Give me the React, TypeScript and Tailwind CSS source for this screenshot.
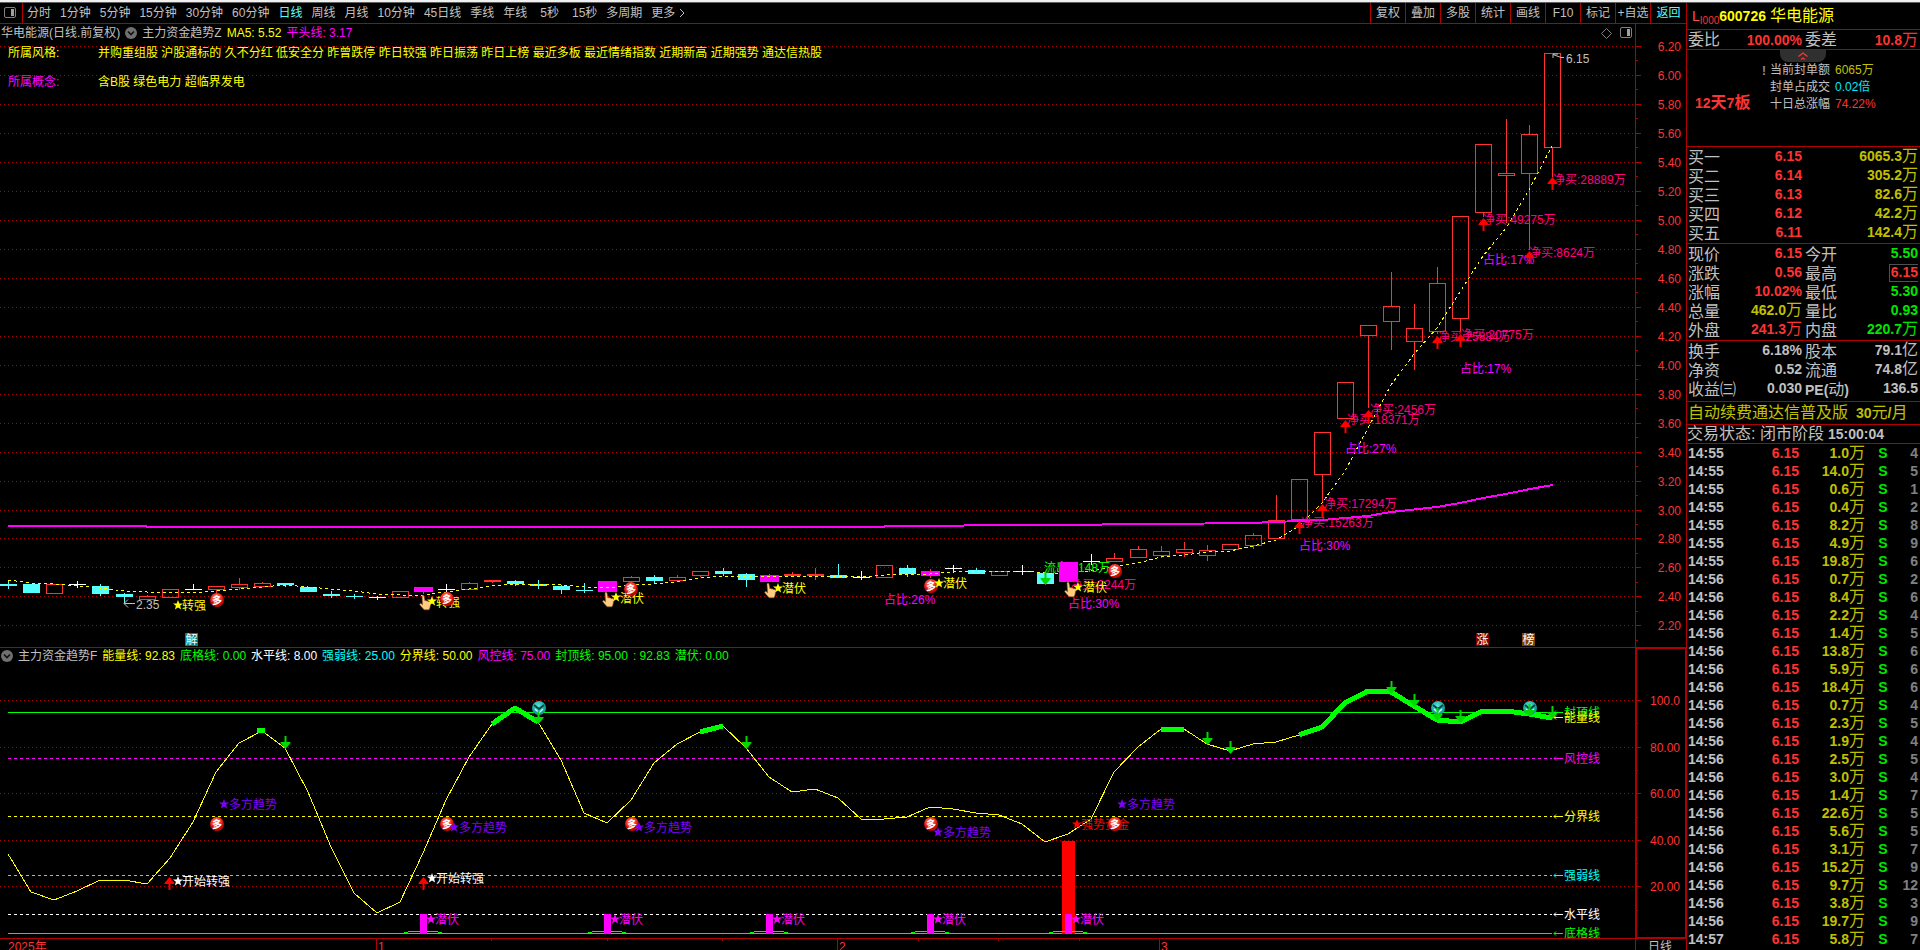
import type { ReactNode } from "react";
import clsx from "clsx";

const periods = ["分时", "1分钟", "5分钟", "15分钟", "30分钟", "60分钟", "日线", "周线", "月线", "10分钟", "45日线", "季线", "年线", "5秒", "15秒", "多周期"];
const tools = ["复权", "叠加", "多股", "统计", "画线", "F10", "标记", "+自选"];

// screen y where each pane begins
const PRICE_TOP = 24;
const ENERGY_TOP = 648;

const barX = (i: number) => Math.round(8.3 + i * 23.045);
const priceY = (p: number) => Math.round(46 + (6.2 - p) * 144.85);
const energyY = (v: number) => Math.round(933 - v * 2.33);

type Kind = "up" | "down" | "flat" | "mark";

// [kind, body top, body bottom, wick top, wick bottom]
const candles: [Kind, number, number, number, number][] = [
    ["down", 584, 586, 581, 589],
    ["down", 584, 593, 584, 593],
    ["up", 584, 593, 584, 593],
    ["flat", 584, 584, 581, 588],
    ["down", 586, 594, 584, 596],
    ["down", 594, 597, 593, 604],
    ["up", 596, 599, 595, 599],
    ["up", 589, 597, 589, 597],
    ["flat", 589, 589, 584, 589],
    ["up", 586, 589, 586, 593],
    ["up", 584, 587, 578, 590],
    ["up", 583, 586, 582, 586],
    ["down", 583, 585, 583, 587],
    ["down", 587, 592, 587, 592],
    ["down", 594, 596, 591, 598],
    ["down", 596, 597, 594, 599],
    ["flat", 597, 597, 596, 600],
    ["up", 591, 597, 591, 598],
    ["mark", 587, 592, 587, 594],
    ["flat", 589, 589, 584, 591],
    ["up", 583, 589, 582, 589],
    ["up", 580, 581, 580, 583],
    ["down", 581, 584, 580, 586],
    ["down", 584, 586, 580, 589],
    ["down", 586, 590, 585, 594],
    ["down", 590, 591, 583, 593],
    ["mark", 581, 592, 581, 592],
    ["up", 577, 581, 576, 583],
    ["down", 577, 581, 575, 584],
    ["up", 577, 580, 575, 580],
    ["up", 571, 575, 571, 577],
    ["down", 571, 574, 568, 576],
    ["down", 574, 580, 573, 587],
    ["mark", 575, 582, 574, 582],
    ["up", 574, 575, 572, 577],
    ["up", 574, 575, 568, 580],
    ["down", 575, 578, 564, 578],
    ["flat", 577, 577, 571, 580],
    ["up", 565, 577, 565, 577],
    ["down", 568, 574, 565, 577],
    ["mark", 571, 576, 569, 578],
    ["flat", 568, 568, 565, 573],
    ["down", 570, 574, 568, 574],
    ["up", 571, 575, 571, 575],
    ["flat", 571, 571, 565, 575],
    ["down", 573, 584, 573, 584],
    ["mark", 562, 582, 562, 582],
    ["flat", 561, 561, 554, 565],
    ["up", 558, 561, 553, 561],
    ["up", 549, 557, 546, 557],
    ["up", 551, 555, 546, 558],
    ["up", 549, 552, 542, 557],
    ["up", 550, 555, 545, 561],
    ["up", 544, 549, 544, 549],
    ["up", 535, 545, 533, 549],
    ["up", 520, 538, 495, 538],
    ["up", 479, 519, 479, 519],
    ["up", 432, 474, 432, 503],
    ["up", 382, 418, 382, 418],
    ["up", 325, 335, 325, 408],
    ["up", 306, 321, 272, 350],
    ["up", 328, 341, 304, 370],
    ["up", 283, 331, 267, 334],
    ["up", 216, 318, 216, 332],
    ["up", 144, 212, 144, 217],
    ["up", 173, 175, 119, 223],
    ["up", 134, 173, 125, 250],
    ["up", 53, 147, 53, 177],
];

const ma5 = [
    580, 583, 584, 586, 588, 591, 592, 592, 593, 591, 589, 587, 585, 587, 589, 591, 594, 595, 595, 592, 589, 586, 584, 584,
    585, 587, 588, 585, 584, 582, 578, 576, 576, 576, 576, 576, 576, 577, 575, 574, 574, 572, 571, 571, 571, 573, 573, 571,
    567, 563, 557, 555, 552, 551, 546, 540, 526, 503, 471, 428, 385, 354, 328, 292, 256, 228, 190, 146,
];

const energy = [
    854, 892, 900, 891, 880, 880, 884, 858, 822, 772, 743, 731, 748, 792, 847, 893, 913, 902, 853, 800, 757, 724, 708, 722,
    760, 813, 823, 800, 763, 744, 732, 726, 748, 777, 792, 789, 798, 819, 819, 817, 807, 809, 813, 815, 824, 842, 834, 819,
    772, 747, 729, 729, 744, 751, 744, 742, 735, 727, 703, 691, 692, 706, 720, 722, 711, 711, 714, 718,
];

const strongRuns: [number, number][] = [[21, 23], [30, 31], [50, 51], [56, 67]];

const points = (ys: number[], from = 0) => ys.map((y, i) => `${barX(i + from)},${y}`).join(" ");

const flows: [number, number, string][] = [
    [1553, 179, "净买:28889万"],
    [1483, 219, "净买:49275万"],
    [1529, 252, "净买:8624万"],
    [1438, 336, "净买:25884万"],
    [1461, 334, "净买:20775万"],
    [1370, 409, "净买:2456万"],
    [1347, 419, "净买:18371万"],
    [1324, 503, "净买:17294万"],
    [1301, 522, "净买:15263万"],
    [1070, 584, "净买:3244万"],
];

const ratios: [number, number, string][] = [
    [1483, 259, "占比:17%"],
    [1460, 368, "占比:17%"],
    [1345, 448, "占比:27%"],
    [1299, 545, "占比:30%"],
    [884, 599, "占比:26%"],
    [1068, 603, "占比:30%"],
];

const legend: [string, string][] = [
    ["text-[#ffff00]", "能量线: 92.83"],
    ["text-[#00ff00]", "底格线: 0.00"],
    ["text-white", "水平线: 8.00"],
    ["text-[#00ffff]", "强弱线: 25.00"],
    ["text-[#ffff00]", "分界线: 50.00"],
    ["text-[#ff00ff]", "风控线: 75.00"],
    ["text-[#00ff00]", "封顶线: 95.00"],
    ["text-[#00ff00]", ": 92.83"],
    ["text-[#00ff00]", "潜伏: 0.00"],
];

const levels: [number, string, string][] = [
    [712, "#00ff00", "封顶线"],
    [717, "#ffff00", "能量线"],
    [758, "#ff00ff", "风控线"],
    [816, "#ffff00", "分界线"],
    [875, "#00ffff", "强弱线"],
    [914, "#ffffff", "水平线"],
    [933, "#00ff00", "底格线"],
];

const bids = [["买一", "6.15", "6065.3"], ["买二", "6.14", "305.2"], ["买三", "6.13", "82.6"], ["买四", "6.12", "42.2"], ["买五", "6.11", "142.4"]];

const RED = "text-[#ff3232]";
const GREEN = "text-[#00e600]";
const YELLOW = "text-[#c0c000]";
const GREY = "text-[#c0c0c0]";

const quotes = [
    ["现价", "6.15", RED, "今开", "5.50", GREEN],
    ["涨跌", "0.56", RED, "最高", "6.15", RED],
    ["涨幅", "10.02%", RED, "最低", "5.30", GREEN],
    ["总量", "462.0万", YELLOW, "量比", "0.93", GREEN],
    ["外盘", "241.3万", RED, "内盘", "220.7万", GREEN],
];

const finance = [
    ["换手", "6.18%", GREY, "股本", "79.1亿", GREY],
    ["净资", "0.52", GREY, "流通", "74.8亿", GREY],
    ["收益㈢", "0.030", GREY, "PE(动)", "136.5", GREY],
];

const ticks: [string, string, string][] = [
    ["14:55", "1.0", "4"], ["14:55", "14.0", "5"], ["14:55", "0.6", "1"], ["14:55", "0.4", "2"],
    ["14:55", "8.2", "8"], ["14:55", "4.9", "9"], ["14:55", "19.8", "6"], ["14:56", "0.7", "2"],
    ["14:56", "8.4", "6"], ["14:56", "2.2", "4"], ["14:56", "1.4", "5"], ["14:56", "13.8", "6"],
    ["14:56", "5.9", "6"], ["14:56", "18.4", "6"], ["14:56", "0.7", "4"], ["14:56", "2.3", "5"],
    ["14:56", "1.9", "4"], ["14:56", "2.5", "5"], ["14:56", "3.0", "4"], ["14:56", "1.4", "7"],
    ["14:56", "22.6", "5"], ["14:56", "5.6", "5"], ["14:56", "3.1", "7"], ["14:56", "15.2", "9"],
    ["14:56", "9.7", "12"], ["14:56", "3.8", "3"], ["14:56", "19.7", "9"], ["14:57", "5.8", "7"],
];

export default function App() {
    return (
        <div className="flex h-screen flex-col overflow-hidden bg-black font-['Liberation_Sans','Noto_Sans_CJK_SC',sans-serif] text-xs text-[#c0c0c0]">
            <div className="h-[3px] shrink-0 border-b border-[#606060] bg-[#f0f0f0]" />
            <div className="flex min-h-0 flex-1">
                <main className="flex min-w-0 flex-1 flex-col">
                    <Toolbar />
                    <PricePane />
                    <EnergyPane />
                    <DateAxis />
                </main>
                <QuotePanel />
            </div>
        </div>
    );
}

const Toolbar = () => (
    <header className="flex h-[21px] shrink-0 items-stretch border-b border-[#b00000] whitespace-nowrap">
        <button aria-label="侧栏" className="flex w-[23px] shrink-0 items-center justify-start border-r border-[#b00000] pl-1">
            <SideIcon />
        </button>
        <nav className="flex min-w-0 flex-1 items-center gap-[9px] overflow-hidden pl-1">
            {periods.map((p) => (
                <button key={p} className={clsx("shrink-0", p === "日线" && "text-[#54ffff]", p === "5秒" && "px-1")}>
                    {p}
                </button>
            ))}
            <button className="flex shrink-0 items-center gap-1">
                更多
                <svg width="6" height="10" fill="none" stroke="#c0c0c0">
                    <path d="M1 1l4 4-4 4" />
                </svg>
            </button>
        </nav>
        {tools.map((t) => (
            <button key={t} className="w-[35px] shrink-0 border-l border-[#b00000]">
                {t}
            </button>
        ))}
        <button className="w-[36px] shrink-0 border-l border-[#b00000] text-[#54ffff]">返回</button>
    </header>
);

const SideIcon = () => (
    <svg width="13" height="12" fill="none" stroke="#808080">
        <rect x="0.5" y="0.5" width="11" height="10" rx="1.5" />
        <path d="M8.5 2v7" stroke="#a0a0a0" strokeWidth="3" />
    </svg>
);

const MenuDot = () => (
    <button aria-label="指标菜单" className="shrink-0">
        <svg width="12" height="12" className="block">
            <circle cx="6" cy="6" r="6" fill="#707070" />
            <path d="M3 4.5l3 3 3-3" fill="none" stroke="#101010" strokeWidth="1.6" />
        </svg>
    </button>
);

const Label = ({ x, y, fill, children }: { x: number; y: number; fill: string; children: ReactNode }) => (
    <text x={x} y={y + 5} fill={fill}>
        {children}
    </text>
);

const ArrowUp = ({ x, y }: { x: number; y: number }) => (
    <path d={`M${x + 0.5} ${y}l-5 6v1h4v6h2v-6h4v-1z`} fill="#ff0000" />
);

const ArrowDown = ({ x, y }: { x: number; y: number }) => (
    <path d={`M${x + 0.5} ${y}l-5 -6v-1h4v-6h2v6h4v1z`} fill="#00d800" />
);

const Star = ({ x, y, fill }: { x: number; y: number; fill: string }) => (
    <path d={`M${x} ${y - 5}l1.3 3.4 3.7 .1 -2.9 2.3 1 3.7 -3.1 -2.1 -3.1 2.1 1 -3.7 -2.9 -2.3 3.7 -.1z`} fill={fill} />
);

const BullBall = ({ x, y }: { x: number; y: number }) => (
    <g>
        <circle cx={x} cy={y} r="7" fill="url(#bull)" />
        <text x={x} y={y + 4} fill="#fff" textAnchor="middle" className="text-[10px] font-bold">
            多
        </text>
    </g>
);

const BearBall = ({ x, y }: { x: number; y: number }) => (
    <g>
        <circle cx={x} cy={y} r="7" fill="url(#bear)" />
        <path d={`M${x - 5} ${y - 3}l5 4 5 -4`} fill="none" stroke="#064848" strokeWidth="2" />
        <path d={`M${x - 4} ${y + 1}l4 4 4 -4`} fill="none" stroke="#e0ffff" strokeWidth="1.2" />
    </g>
);

const Hand = ({ x, y }: { x: number; y: number }) => (
    <path
        transform={`translate(${x - 6} ${y - 8})`}
        d="M3 1.2c0-1.3 2-1.3 2 0L6 6c.5-.8 1.6-.6 1.9.2.6-.6 1.6-.3 1.8.5.8-.4 1.8 0 1.8 1.1 0 3-.3 4.8-1.5 7H5.2C4 13.500 2.4 12 .8 9.8c-.5-1 .7-1.8 1.5-1.1l1.3 1.1z"
        fill="#ffcc80"
        stroke="#8a5428"
        strokeWidth="0.6"
    />
);

const Defs = () => (
    <defs>
        <radialGradient id="bull" cx="45%" cy="35%">
            <stop offset="0" stopColor="#ff8878" />
            <stop offset="0.7" stopColor="#f43024" />
            <stop offset="1" stopColor="#c00808" />
        </radialGradient>
        <radialGradient id="bear" cx="45%" cy="35%">
            <stop offset="0" stopColor="#58e8e0" />
            <stop offset="1" stopColor="#10a098" />
        </radialGradient>
    </defs>
);

const Candle = ({ i }: { i: number }) => {
    const [kind, top, bottom, high, low] = candles[i];
    const x = barX(i);
    const wick = { up: "#ff3232", down: "#54ffff", flat: "#ffffff", mark: "#ff3232" }[kind];
    if (kind === "up") {
        return (
            <g stroke={wick} fill="none">
                <rect x={x - 7.5} y={top + 0.5} width="16" height={bottom - top} />
                <path d={`M${x + 0.5} ${high}V${top}M${x + 0.5} ${bottom}V${low}`} />
            </g>
        );
    }
    return (
        <g>
            <path d={`M${x + 0.5} ${high}V${low}`} stroke={wick} />
            {kind === "mark" ? (
                <rect x={x - 9} y={top} width="19" height={bottom - top} fill="#ff00ff" />
            ) : (
                <rect x={x - 8} y={top} width="17" height={Math.max(1, bottom - top)} fill={wick} />
            )}
        </g>
    );
};

const Grid = ({ rows }: { rows: number[] }) => (
    <g stroke="#b00000" strokeDasharray="1 3">
        {rows.map((y) => (
            <line key={y} x1="0" x2="100%" y1={y + 0.5} y2={y + 0.5} />
        ))}
    </g>
);

const prices = Array.from({ length: 21 }, (_, i) => 6.2 - i * 0.2);

const PricePane = () => (
    <section className="flex min-h-0 flex-[624] border-b border-[#b00000]">
        <div className="relative min-w-0 flex-1 overflow-hidden">
            <svg className="absolute inset-0 h-full w-full">
                <Defs />
                <g transform={`translate(0 ${-PRICE_TOP})`}>
                    <g shapeRendering="crispEdges">
                        <Grid rows={prices.map(priceY)} />
                        {candles.map((_, i) => (
                            <Candle key={i} i={i} />
                        ))}
                        <polyline points={points(ma5)} fill="none" stroke="#ffff00" strokeDasharray="3 3" />
                        <polyline
                            points="8,526 146,526 147,527 884,527 885,526 1045,525 1160,524 1250,523 1299,521 1322,520 1368,516 1391,512 1437,507 1460,503 1483,498 1506,494 1530,489 1553,485"
                            fill="none"
                            stroke="#ff00ff"
                            strokeWidth="2"
                        />
                    </g>
                    <Label x={1044} y={567} fill="#00ff00">流出:4148万</Label>
                    <rect x="1059" y="562" width="19" height="20" fill="#ff00ff" />
                    {flows.map(([x, y, t]) => (
                        <Label key={t} x={x} y={y} fill="#ff0080">{t}</Label>
                    ))}
                    {ratios.map(([x, y, t]) => (
                        <Label key={x} x={x} y={y} fill="#ff00ff">{t}</Label>
                    ))}
                    <ArrowUp x={barX(56)} y={521} />
                    <ArrowUp x={barX(57)} y={504} />
                    <ArrowUp x={barX(58)} y={420} />
                    <ArrowUp x={barX(59)} y={410} />
                    <ArrowUp x={barX(62)} y={336} />
                    <ArrowUp x={barX(63)} y={334} />
                    <ArrowUp x={barX(64)} y={218} />
                    <ArrowUp x={barX(66)} y={251} />
                    <ArrowUp x={barX(67)} y={177} />
                    <ArrowDown x={barX(45)} y={585} />

                    <path d="M1564 57.5h-3l-8 -3M1553 58v-4h5" fill="none" stroke="#c0c0c0" />
                    <Label x={1566} y={58} fill="#c0c0c0">6.15</Label>
                    <path d="M135 603.5h-11m4 -4l-4 4 4 4" fill="none" stroke="#c0c0c0" />
                    <Label x={136} y={604} fill="#c0c0c0">2.35</Label>

                    <Star x={178} y={605} fill="#ffff00" />
                    <Label x={182} y={605} fill="#ffff00">转强</Label>
                    <BullBall x={217} y={600} />
                    <Hand x={425} y={603} />
                    <Star x={432} y={601} fill="#ffff00" />
                    <Label x={436} y={602} fill="#ffff00">转强</Label>
                    <BullBall x={447} y={599} />
                    <Hand x={608} y={600} />
                    <Star x={616} y={597} fill="#ffff00" />
                    <Label x={620} y={598} fill="#ffff00">潜伏</Label>
                    <BullBall x={631} y={589} />
                    <Hand x={770} y={591} />
                    <Star x={778} y={588} fill="#ffff00" />
                    <Label x={782} y={588} fill="#ffff00">潜伏</Label>
                    <BullBall x={931} y={586} />
                    <Star x={939} y={583} fill="#ffff00" />
                    <Label x={943} y={583} fill="#ffff00">潜伏</Label>
                    <Hand x={1070} y={590} />
                    <Star x={1078} y={587} fill="#ffff00" />
                    <Label x={1083} y={587} fill="#ffff00">潜伏</Label>
                    <BullBall x={1115} y={571} />

                    <EventTag x={185} fill="#008080" text="解" />
                    <EventTag x={1476} fill="#800000" text="涨" />
                    <EventTag x={1522} fill="#804000" text="榜" />
                </g>
            </svg>
            <div className="relative">
                <div className="flex h-[18px] items-center gap-[5px] pl-px whitespace-nowrap">
                    <span>华电能源(日线.前复权)</span>
                    <MenuDot />
                    <span>主力资金趋势Z</span>
                    <span className="text-[#ffff00]">MA5: 5.52</span>
                    <span className="text-[#ff00ff]">平头线: 3.17</span>
                    <div className="ml-auto flex items-center gap-2 pr-0.5">
                        <button aria-label="标记">
                            <svg width="11" height="11" className="block" fill="none" stroke="#808080">
                                <path d="M5.5 .5l5 5-5 5-5-5z" />
                            </svg>
                        </button>
                        <button aria-label="右侧栏">
                            <SideIcon />
                        </button>
                    </div>
                </div>
                <dl className="flex flex-col gap-[9px] pt-px pl-2 text-[#ffff00]">
                    <div className="flex h-5 items-center whitespace-nowrap">
                        <dt className="w-[90px]">所属风格:</dt>
                        <dd>并购重组股 沪股通标的 久不分红 低安全分 昨曾跌停 昨日较强 昨日振荡 昨日上榜 最近多板 最近情绪指数 近期新高 近期强势 通达信热股</dd>
                    </div>
                    <div className="flex h-5 items-center whitespace-nowrap">
                        <dt className="w-[90px] text-[#ff00ff]">所属概念:</dt>
                        <dd>含B股 绿色电力 超临界发电</dd>
                    </div>
                </dl>
            </div>
        </div>
        <svg className="h-full w-[51px] shrink-0 border-l border-[#b00000]">
            <g transform={`translate(0 ${-PRICE_TOP})`}>
                {prices.map((p) => (
                    <g key={p}>
                        <path d={`M0 ${priceY(p) + 0.5}h5M0 ${priceY(p - 0.1) + 0.5}h2`} stroke="#b00000" />
                        <text x="45" y={priceY(p) + 5} textAnchor="end" fill="#ff3232">
                            {p.toFixed(2)}
                        </text>
                    </g>
                ))}
            </g>
        </svg>
    </section>
);

const EventTag = ({ x, fill, text }: { x: number; fill: string; text: string }) => (
    <g>
        <rect x={x} y="633" width="13" height="13" fill={fill} />
        <text x={x + 0.5} y="644" fill="#fff">
            {text}
        </text>
    </g>
);

const energyTicks = [100, 80, 60, 40, 20];

const EnergyPane = () => (
    <section className="flex min-h-0 flex-[291] border-b border-[#b00000]">
        <div className="relative min-w-0 flex-1 overflow-hidden">
            <svg className="absolute inset-0 h-full w-full">
                <g transform={`translate(0 ${-ENERGY_TOP})`}>
                    <g shapeRendering="crispEdges" fill="none">
                        <Grid rows={energyTicks.map(energyY)} />
                        <path d="M8 712.5H1552M8 933.5H1552" stroke="#00ff00" />
                        <path d="M8 758.5H1552" stroke="#ff00ff" strokeDasharray="3 3" />
                        <path d="M8 816.5H1552" stroke="#ffff00" strokeDasharray="3 3" />
                        <path d="M8 875.5H1552" stroke="#00ffff" strokeDasharray="3 3" />
                        <path d="M8 914.5H1552" stroke="#ffffff" strokeDasharray="3 3" />
                        <rect x="1062" y="841" width="13" height="93" fill="#ff0000" />
                        <polyline points={points(energy)} stroke="#ffff00" />
                        <path d="M257 730.5h8" stroke="#00ff00" strokeWidth="5" />
                        {strongRuns.map(([a, b]) => (
                            <polyline key={a} points={points(energy.slice(a, b + 1), a)} stroke="#00ff00" strokeWidth="5" strokeLinejoin="round" />
                        ))}
                        {[18, 26, 33, 40, 46].map((i) => (
                            <g key={i}>
                                <path d={`M${barX(i) - 19} 932.5l8 -1h22l8 1`} stroke="#00ff00" />
                                <rect x={barX(i) - 3} y="914" width="7" height="20" fill="#ff00ff" />
                            </g>
                        ))}
                    </g>

                    {[18, 26, 33, 40, 46].map((i) => (
                        <g key={i}>
                            <Star x={barX(i) + 8} y={919} fill="#ff00ff" />
                            <Label x={barX(i) + 12} y={919} fill="#ff00ff">潜伏</Label>
                        </g>
                    ))}

                    <ArrowUp x={169} y={877} />
                    <Star x={178} y={881} fill="#ffffff" />
                    <Label x={182} y={881} fill="#ffffff">开始转强</Label>
                    <ArrowUp x={423} y={877} />
                    <Star x={432} y={878} fill="#ffffff" />
                    <Label x={436} y={878} fill="#ffffff">开始转强</Label>

                    <Star x={1077} y={824} fill="#ff0000" />
                    <Label x={1081} y={824} fill="#ff0000">强势资金</Label>
                    {[9, 19, 27, 40, 48].map((i) => (
                        <BullBall key={i} x={barX(i) + 1} y={824} />
                    ))}
                    {[[9, 804], [19, 827], [27, 827], [40, 832], [48, 804]].map(([i, y]) => (
                        <g key={i}>
                            <Star x={barX(i) + 8} y={y} fill="#8000ff" />
                            <Label x={barX(i) + 13} y={y} fill="#8000ff">多方趋势</Label>
                        </g>
                    ))}

                    {[23, 62, 66].map((i) => (
                        <BearBall key={i} x={barX(i) + 1} y={708} />
                    ))}
                    {[[12, 749], [23, 724], [32, 749], [52, 745], [53, 754], [60, 694], [61, 707], [62, 721], [63, 723], [66, 717], [67, 719]].map(([i, y]) => (
                        <ArrowDown key={i} x={barX(i)} y={y} />
                    ))}

                    {levels.map(([y, color, name]) => (
                        <g key={name}>
                            <path d={`M1563 ${y + 0.5}h-9m2 -2l-2 2 2 2`} fill="none" stroke={color} />
                            <Label x={1564} y={y} fill={color}>{name}</Label>
                        </g>
                    ))}
                </g>
            </svg>
            <div className="relative flex h-4 items-center gap-[5px] pl-px whitespace-nowrap">
                <MenuDot />
                <span>主力资金趋势F</span>
                {legend.map(([color, text]) => (
                    <span key={text} className={color}>
                        {text}
                    </span>
                ))}
            </div>
        </div>
        <svg className="h-full w-[51px] shrink-0 border border-l-2 border-[#b00000]">
            <g transform={`translate(0 ${-ENERGY_TOP - 1})`}>
                {energyTicks.map((v) => (
                    <g key={v}>
                        <path d={`M0 ${energyY(v) + 0.5}h4M0 ${energyY(v - 10) + 0.5}h1`} stroke="#b00000" />
                        <text x="43" y={energyY(v) + 5} textAnchor="end" fill="#ff3232">
                            {v === 100 ? "100.0" : v.toFixed(2)}
                        </text>
                    </g>
                ))}
            </g>
        </svg>
    </section>
);

const DateAxis = () => (
    <footer className="flex h-[11px] shrink-0 overflow-hidden">
        <svg className="h-full min-w-0 flex-1">
            <path d="M376.5 0v11M837.5 0v11M1159.5 0v11M491.5 0v2M607.5 0v2M722.5 0v2M918.5 0v2M998.5 0v2M1079.5 0v2" stroke="#b00000" />
            <g fill="#ff3232">
                <text x="8" y="12">2025年</text>
                <text x="378" y="12">1</text>
                <text x="839" y="12">2</text>
                <text x="1161" y="12">3</text>
            </g>
        </svg>
        <div className="w-[51px] shrink-0 border-l border-[#b00000] pl-3 leading-4">日线</div>
    </footer>
);

// digits are bold and small, the 万/亿 unit is regular and larger
const Amount = ({ value }: { value: string }) => {
    const unit = value.match(/[万亿]$/)?.[0];
    return (
        <>
            <span className="text-sm leading-none font-bold">{unit ? value.slice(0, -1) : value}</span>
            {unit && <span className="text-base leading-none font-normal">{unit}</span>}
        </>
    );
};

const QuoteTable = ({ rows }: { rows: string[][] }) => (
    <table className="w-full table-fixed leading-[19px]">
        <colgroup>
            <col className="w-[50px]" />
            <col className="w-[65px]" />
            <col className="w-[54px]" />
            <col />
        </colgroup>
        <tbody>
            {rows.map(([a, av, ac, b, bv, bc]) => (
                <tr key={a} className="h-[19px] whitespace-nowrap">
                    <th scope="row" className="p-0 pl-px text-left text-base leading-[19px] font-normal">{a}</th>
                    <td className={clsx("p-0 text-right leading-[19px]", ac)}>
                        <Amount value={av} />
                    </td>
                    <th scope="row" className="p-0 pl-[3px] text-left text-base leading-[19px] font-normal">
                        {b.startsWith("PE") ? (
                            <>
                                <span className="text-sm leading-none font-bold">PE(</span>动<span className="text-sm leading-none font-bold">)</span>
                            </>
                        ) : (
                            b
                        )}
                    </th>
                    <td className={clsx("p-0 pr-0.5 text-right leading-[19px]", bc)}>
                        {b === "最高" ? (
                            <span className="inline-block h-[18px] border border-r-0 border-[#505050] pl-px align-top leading-4">
                                <Amount value={bv} />
                            </span>
                        ) : (
                            <Amount value={bv} />
                        )}
                    </td>
                </tr>
            ))}
        </tbody>
    </table>
);

const QuotePanel = () => (
    <aside className="flex w-[234px] shrink-0 flex-col overflow-hidden border-l border-[#b00000]">
        <h1 className="flex h-[27px] shrink-0 items-center border-b border-[#b00000] pl-[5px] text-[#ffff00]">
            <span className="text-sm text-[#ff5050]">L</span>
            <span className="self-end text-[10px] leading-4 text-[#ff3232]">I000</span>
            <span className="text-sm font-bold">600726</span>
            <span className="pl-1 text-base leading-none font-normal">华电能源</span>
        </h1>
        <div className="flex h-5 shrink-0 items-center border-b border-[#b00000] text-base leading-none font-normal whitespace-nowrap">
            <span className="w-[50px] pl-px">委比</span>
            <span className="w-[65px] text-right text-sm font-bold text-[#ff3232]">100.00%</span>
            <span className="pl-[3px]">委差</span>
            <span className="ml-auto flex items-center pr-0.5 text-[#ff3232]">
                <Amount value="10.8万" />
            </span>
        </div>

        <div className="flex h-[97px] shrink-0 flex-col border-b border-[#b00000]">
            <button aria-label="收起" className="ml-[93px] flex h-3 w-[46px] items-center justify-center rounded-b-lg bg-[#303030]">
                <svg width="10" height="8" fill="none" stroke="#ff3232" strokeWidth="1.3">
                    <path d="M.5 4.5l4.5-3.5 4.5 3.5M3 7.5l2-1.5 2 1.5" />
                </svg>
            </button>
            <div className="flex whitespace-nowrap">
                <strong className="w-[75px] self-end pl-2 text-sm font-bold text-[#ff3232]">
                    12<span className="text-base leading-none">天</span>7<span className="text-base leading-none">板</span>
                </strong>
                <span className="w-2 pt-px leading-[17px] font-bold text-[#909090]">!</span>
                <dl className="grid grid-cols-[65px_auto] leading-[17px]">
                    <dt>当前封单额</dt>
                    <dd className="text-[#c0c000]">6065万</dd>
                    <dt>封单占成交</dt>
                    <dd className="text-[#00e6ff]">0.02倍</dd>
                    <dt>十日总涨幅</dt>
                    <dd className="text-[#ff3232]">74.22%</dd>
                </dl>
            </div>
        </div>

        <div className="h-[97px] shrink-0 border-b border-[#b00000] pt-px">
            <table className="w-full table-fixed leading-[19px]">
                <colgroup>
                    <col className="w-[50px]" />
                    <col className="w-[65px]" />
                    <col />
                </colgroup>
                <tbody>
                    {bids.map(([name, price, volume]) => (
                        <tr key={name} className="h-[19px]">
                            <th scope="row" className="p-0 pl-px text-left text-base leading-[19px] font-normal">{name}</th>
                            <td className="p-0 text-right text-[#ff3232]">
                                <Amount value={price} />
                            </td>
                            <td className="p-0 pr-0.5 text-right text-[#c0c000]">
                                <Amount value={volume + "万"} />
                            </td>
                        </tr>
                    ))}
                </tbody>
            </table>
        </div>
        <div className="h-[97px] shrink-0 border-b border-[#b00000] pt-px">
            <QuoteTable rows={quotes} />
        </div>
        <div className="h-[61px] shrink-0 border-b border-[#b00000] pt-px">
            <QuoteTable rows={finance} />
        </div>

        <a href="#renew" className="flex h-[23px] shrink-0 items-center border-b border-[#b00000] pl-px text-base leading-none font-normal whitespace-nowrap text-[#c0c000]">
            自动续费通达信普及版
            <span className="pl-2 text-sm font-bold">30</span>元<span className="text-sm font-bold">/</span>月
        </a>
        <p className="flex h-[19px] shrink-0 items-center border-b border-[#b00000] text-base leading-none font-normal whitespace-nowrap">
            交易状态: 闭市阶段
            <span className="pl-1 text-sm font-bold">15:00:04</span>
        </p>

        <table className="w-full table-fixed text-sm font-bold">
            <colgroup>
                <col className="w-[38px]" />
                <col className="w-[74px]" />
                <col className="w-[66px]" />
                <col className="w-[36px]" />
                <col />
            </colgroup>
            <tbody>
                {ticks.map(([time, volume, count], i) => (
                    <tr key={i} className="h-[18px] leading-[18px] whitespace-nowrap">
                        <td className="p-0 pl-px">{time}</td>
                        <td className="p-0 text-right text-[#ff3232]">6.15</td>
                        <td className="p-0 text-right text-[#c0c000]">
                            <Amount value={volume + "万"} />
                        </td>
                        <td className="p-0 text-center text-[#00e600]">S</td>
                        <td className="p-0 pr-0.5 text-right text-[#808080]">{count}</td>
                    </tr>
                ))}
            </tbody>
        </table>
    </aside>
);
